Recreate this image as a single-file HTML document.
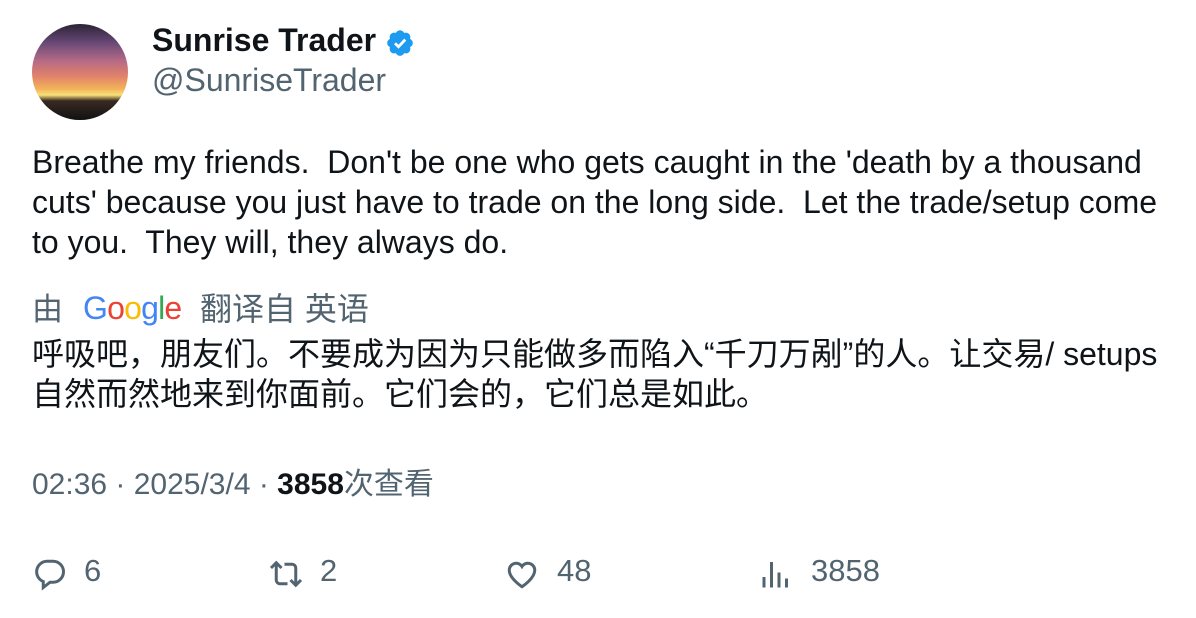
<!DOCTYPE html>
<html><head><meta charset="utf-8"><style>
body{margin:0;background:#fff;width:1196px;height:618px;overflow:hidden;font-family:"Liberation Sans","Noto Sans CJK SC",sans-serif;color:#0f1419;position:relative}
.a{position:absolute;white-space:nowrap}
.g{color:#536471}
</style></head><body>
<div class="a" style="left:32px;top:24px;width:96px;height:96px;border-radius:50%;overflow:hidden;background:linear-gradient(180deg,#2b2336 0%,#6a4a78 20%,#b56a86 38%,#e3836a 55%,#f3b55a 68%,#f8e07a 74%,#3a2a22 80%,#111 100%)"></div>
<div class="a" style="left:152px;top:22px;font-size:32px;font-weight:bold">Sunrise Trader</div>
<svg class="a" style="left:385px;top:28px" width="30" height="30" viewBox="0 0 24 24"><path fill="#1d9bf0" d="M22.25 12c0-1.43-.88-2.670-2.19-3.34.46-1.39.2-2.9-.81-3.910s-2.52-1.27-3.91-.81c-.66-1.31-1.91-2.190-3.34-2.190s-2.67.88-3.33 2.19c-1.4-.46-2.91-.2-3.92.81s-1.26 2.52-.8 3.91C2.63 9.33 1.75 10.57 1.75 12s.88 2.67 2.2 3.34c-.46 1.39-.21 2.9.8 3.91s2.52 1.26 3.91.81c.67 1.31 1.91 2.19 3.34 2.19s2.68-.88 3.34-2.19c1.39.45 2.9.2 3.91-.81s1.27-2.52.81-3.91c1.31-.67 2.19-1.91 2.19-3.34z"/><path fill="none" stroke="#fff" stroke-width="2.2" d="M8 12.2l2.8 2.8L16.2 9.3"/></svg>
<div class="a g" style="left:152px;top:62px;font-size:32px">@SunriseTrader</div>
<div class="a" style="left:32px;top:142px;font-size:32px;line-height:40px">Breathe my friends.&nbsp; Don't be one who gets caught in the 'death by a thousand<br>cuts' because you just have to trade on the long side.&nbsp; Let the trade/setup come<br>to you.&nbsp; They will, they always do.</div>
<div class="a g" style="left:32px;top:284px;font-size:31px">由</div>
<div class="a" style="left:83px;top:290px;font-size:32px;letter-spacing:-0.8px"><span style="color:#4285f4">G</span><span style="color:#ea4335">o</span><span style="color:#fbbc05">o</span><span style="color:#4285f4">g</span><span style="color:#34a853">l</span><span style="color:#ea4335">e</span></div>
<div class="a g" style="left:200px;top:284px;font-size:32px">翻译自 英语</div>
<div class="a" style="left:32px;top:334px;font-size:32px;line-height:40px">呼吸吧，朋友们。不要成为因为只能做多而陷入“千刀万剐”的人。让交易/ setups<br>自然而然地来到你面前。它们会的，它们总是如此。</div>
<div class="a g" style="left:32px;top:459px;font-size:30px">02:36 · 2025/3/4 · <b style="color:#0f1419">3858</b>次查看</div>
<svg class="a" style="left:32px;top:556px" width="36" height="36" viewBox="0 0 24 24"><path fill="none" stroke="#536471" stroke-width="2" d="M10 3.5h4a7 7 0 0 1 0 14h-2l-4.5 3.5v-4A7 7 0 0 1 10 3.5z"/></svg>
<div class="a g" style="left:84px;top:553px;font-size:31px">6</div>
<svg class="a" style="left:268px;top:556px" width="36" height="36" viewBox="0 0 24 24"><path fill="none" stroke="#536471" stroke-width="2" d="M2 8l3.5-3.5L9 8M5.5 5v11a2.5 2.5 0 0 0 2.5 2.5h5M22 16l-3.5 3.5L15 16M18.5 19V8a2.5 2.5 0 0 0-2.5-2.5h-5"/></svg>
<div class="a g" style="left:320px;top:553px;font-size:31px">2</div>
<svg class="a" style="left:504px;top:556px" width="36" height="36" viewBox="0 0 24 24"><path fill="none" stroke="#536471" stroke-width="2" d="M12 20.5s-8.5-5.5-8.5-11A4.6 4.6 0 0 1 12 7a4.6 4.6 0 0 1 8.5 2.5c0 5.5-8.5 11-8.5 11z"/></svg>
<div class="a g" style="left:557px;top:553px;font-size:31px">48</div>
<svg class="a" style="left:758px;top:556px" width="36" height="36" viewBox="0 0 24 24"><path fill="none" stroke="#536471" stroke-width="2" d="M4 21v-7M9 21V4M14 21V11M19 21v-6"/></svg>
<div class="a g" style="left:811px;top:553px;font-size:31px">3858</div>
</body></html>
